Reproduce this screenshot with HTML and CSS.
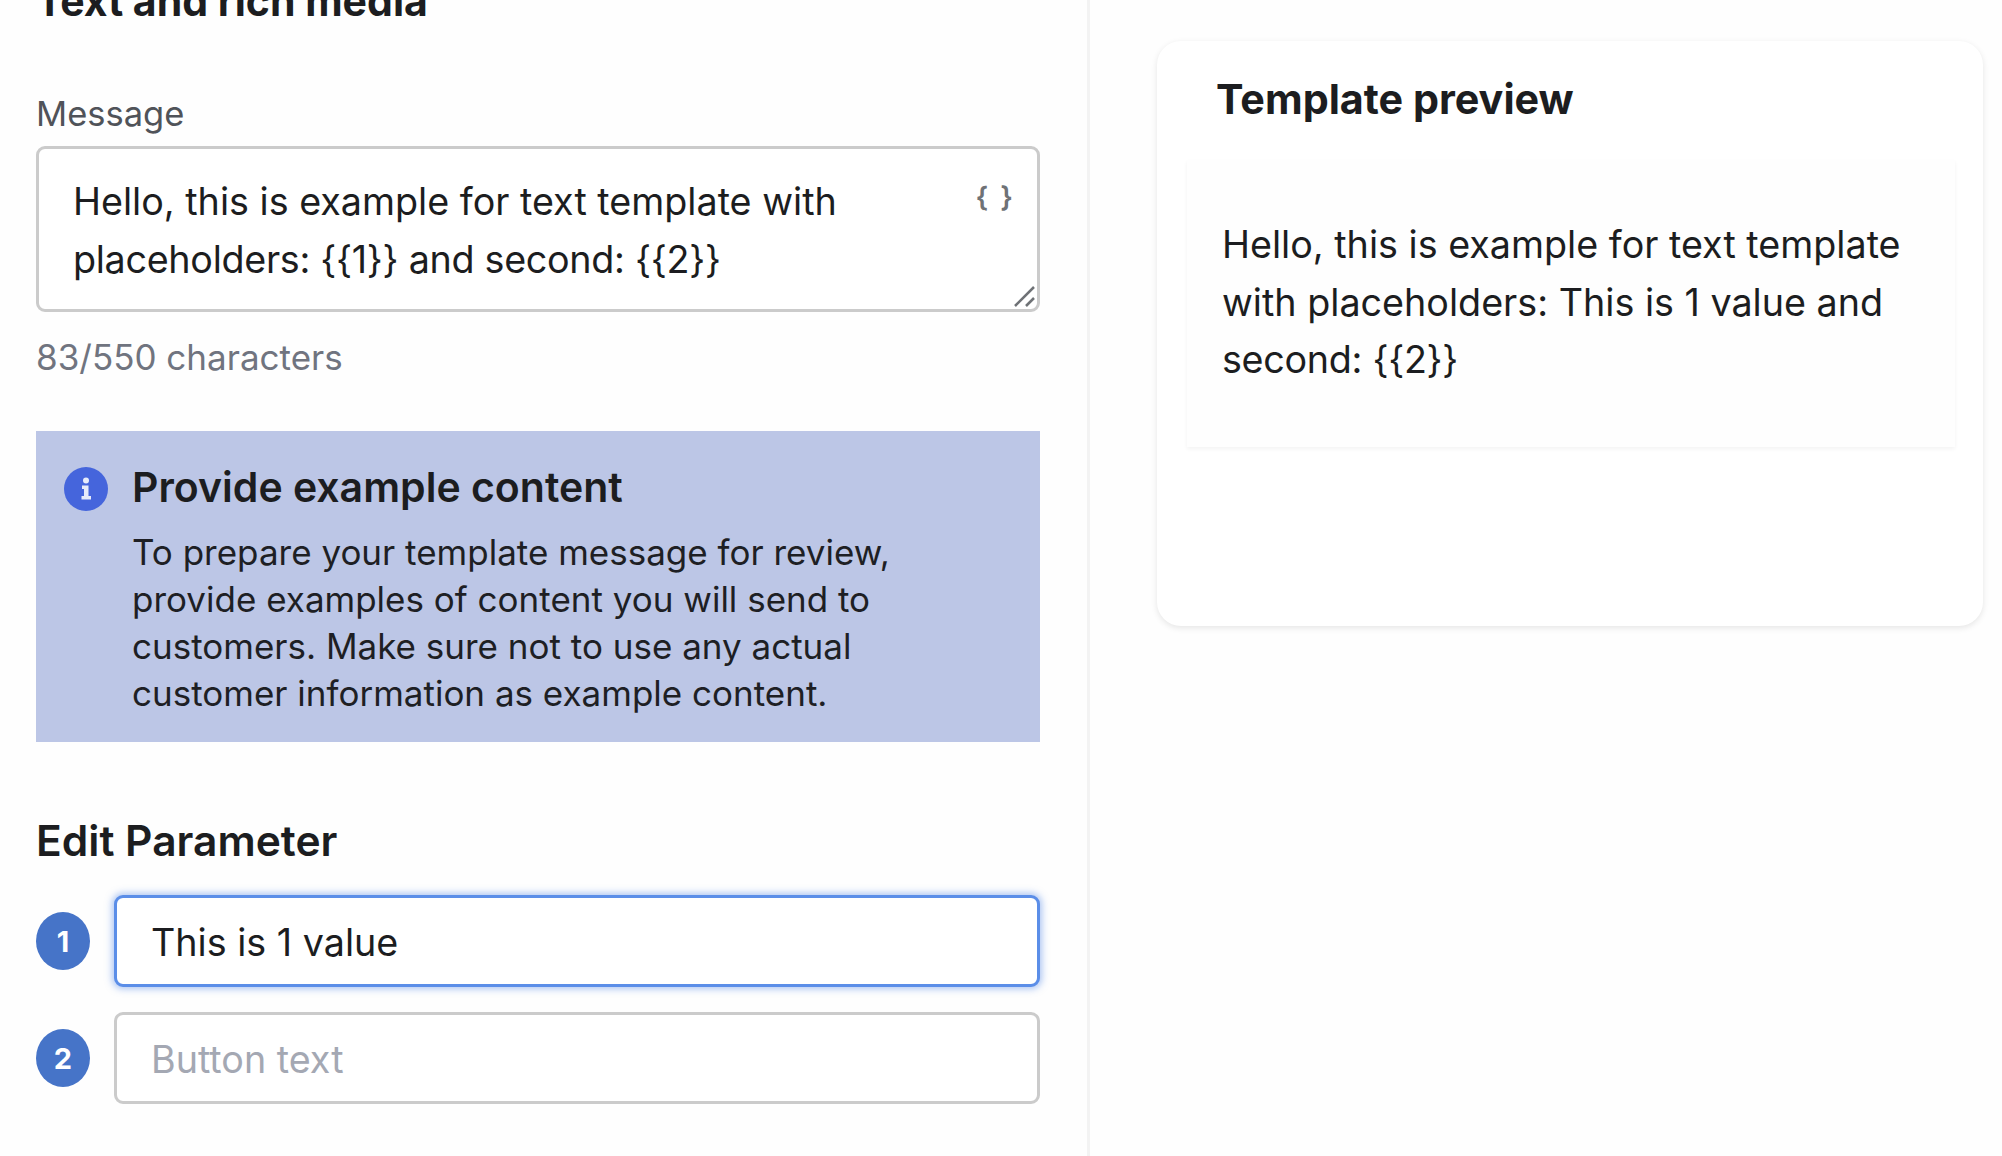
FILE: index.html
```html
<!DOCTYPE html>
<html lang="en">
<head>
<meta charset="utf-8">
<title>Template editor</title>
<link rel="stylesheet" href="styles.css">
</head>
<body>
<main class="page">
  <section class="editor">
    <h2 class="section-title">Text and rich media</h2>
    <label class="field-label">Message</label>
    <div class="message-box">
      <p class="message-text">Hello, this is example for text template with <span class="tight-line">placeholders: {{1}} and second: {{2}}</span></p>
      <span class="braces">{ }</span>
      <svg class="resize-handle" viewBox="0 0 24 24" aria-hidden="true"><path d="M3 22 22 3M14 22l8-8"/></svg>
    </div>
    <p class="char-count">83/550 characters</p>
    <div class="notice">
      <svg class="notice-icon" viewBox="0 0 44 44" aria-hidden="true">
        <circle cx="22" cy="22" r="22" class="notice-disc"/>
        <circle cx="22" cy="13.5" r="3" class="notice-glyph"/>
        <path class="notice-glyph" d="M18 18.500h6.500v10.500H27v3.500H17.500V29H20v-7h-2z"/>
      </svg>
      <div class="notice-body">
        <h3 class="notice-title">Provide example content</h3>
        <p class="notice-text">To prepare your template message for review, provide examples of content you will send to customers. Make sure not to use any actual customer information as example content.</p>
      </div>
    </div>
    <h3 class="param-title">Edit Parameter</h3>
    <div class="param-row">
      <span class="param-badge">1</span>
      <input class="param-input is-focused" type="text" value="This is 1 value">
    </div>
    <div class="param-row">
      <span class="param-badge">2</span>
      <input class="param-input" type="text" placeholder="Button text">
    </div>
  </section>
  <aside class="preview-col">
    <div class="preview-card">
      <h2 class="preview-title">Template preview</h2>
      <div class="bubble">
        <p class="bubble-text">Hello, this is example for text template with placeholders: This is 1 value and <span class="tight-line">second: {{2}}</span></p>
      </div>
    </div>
  </aside>
</main>
</body>
</html>
```
FILE: styles.css
```css
* { box-sizing: border-box; }
html, body { margin: 0; height: 100%; background: #fefefe; overflow: hidden; }
body { font-family: Inter, "Liberation Sans", sans-serif; color: #1c1d20; }
h2, h3, p { margin: 0; }

.page { display: flex; height: 1156px; }

.editor {
  width: 1090px;
  flex: none;
  padding: 0 47px 0 36px;
  border-right: 3px solid #f3f3f3;
}
.section-title { font-size: 41px; font-weight: 700; line-height: 48px; margin-top: -23px; }
.field-label { display: block; margin-top: 69px; font-size: 34.500px; line-height: 40px; color: #505359; }

.message-box {
  position: relative;
  margin-top: 12px;
  height: 166px;
  padding: 24px 34px;
  background: #fff;
  border: 3px solid #cbcbcb;
  border-radius: 9px;
}
.message-text { font-size: 37.700px; line-height: 57.500px; width: 800px; }
.tight-line { letter-spacing: -0.300px; }
.braces {
  position: absolute;
  top: 28px;
  right: 24px;
  font-size: 28px;
  line-height: 40px;
  font-weight: 600;
  color: #6f7276;
  word-spacing: 5px;
}
.resize-handle { position: absolute; right: 1px; bottom: 1px; width: 24px; height: 24px; }
.resize-handle path { fill: none; stroke: #6f7276; stroke-width: 2.500; }

.char-count { margin-top: 25px; font-size: 35px; line-height: 40px; color: #70747f; }

.notice {
  display: flex;
  gap: 24px;
  height: 311px;
  margin-top: 54px;
  padding: 34px 28px;
  background: #bcc6e6;
}
.notice-icon { width: 44px; height: 44px; flex: none; margin-top: 2px; }
.notice-disc { fill: #4565dc; }
.notice-glyph { fill: #e6ebfa; }
.notice-title { font-size: 41px; font-weight: 600; line-height: 44px; }
.notice-text { margin-top: 20px; font-size: 35px; line-height: 47px; width: 800px; color: #1e1f24; }

.param-title { margin-top: 77px; font-size: 42.500px; font-weight: 600; line-height: 44px; }

.param-row { display: flex; align-items: center; gap: 24px; margin-top: 25px; }
.param-title + .param-row { margin-top: 32px; }
.param-badge {
  display: flex;
  align-items: center;
  justify-content: center;
  flex: none;
  width: 54px;
  height: 58px;
  border-radius: 50%;
  background: #4674c8;
  color: #fff;
  font-size: 29px;
  font-weight: 700;
}
.param-input {
  flex: 1;
  min-width: 0;
  height: 92px;
  padding: 2px 34px 0;
  font: 37.700px Inter, "Liberation Sans", sans-serif;
  color: #1c1d20;
  background: #fff;
  border: 3px solid #cbcbcb;
  border-radius: 9px;
  outline: none;
}
.param-input::placeholder { color: #a4a8b3; opacity: 1; }
.param-input.is-focused { border-color: #5b8ee8; box-shadow: 0 0 7px 2px rgba(91, 142, 232, 0.5); }

.preview-col { flex: 1; padding: 41px 19px 0 67px; }
.preview-card {
  height: 585px;
  padding: 36px 28px 36px 30px;
  background: #fff;
  border-radius: 24px;
  box-shadow: 0 2px 6px rgba(0, 0, 0, 0.1);
}
.preview-title { padding-left: 29px; font-size: 41.300px; font-weight: 700; line-height: 44px; }
.bubble {
  margin-top: 39px;
  height: 287px;
  padding: 56px 35px;
  background: #fefefe;
  box-shadow: 0 2px 4px rgba(0, 0, 0, 0.05);
}
.bubble-text { font-size: 37.700px; line-height: 57.500px; }
```
